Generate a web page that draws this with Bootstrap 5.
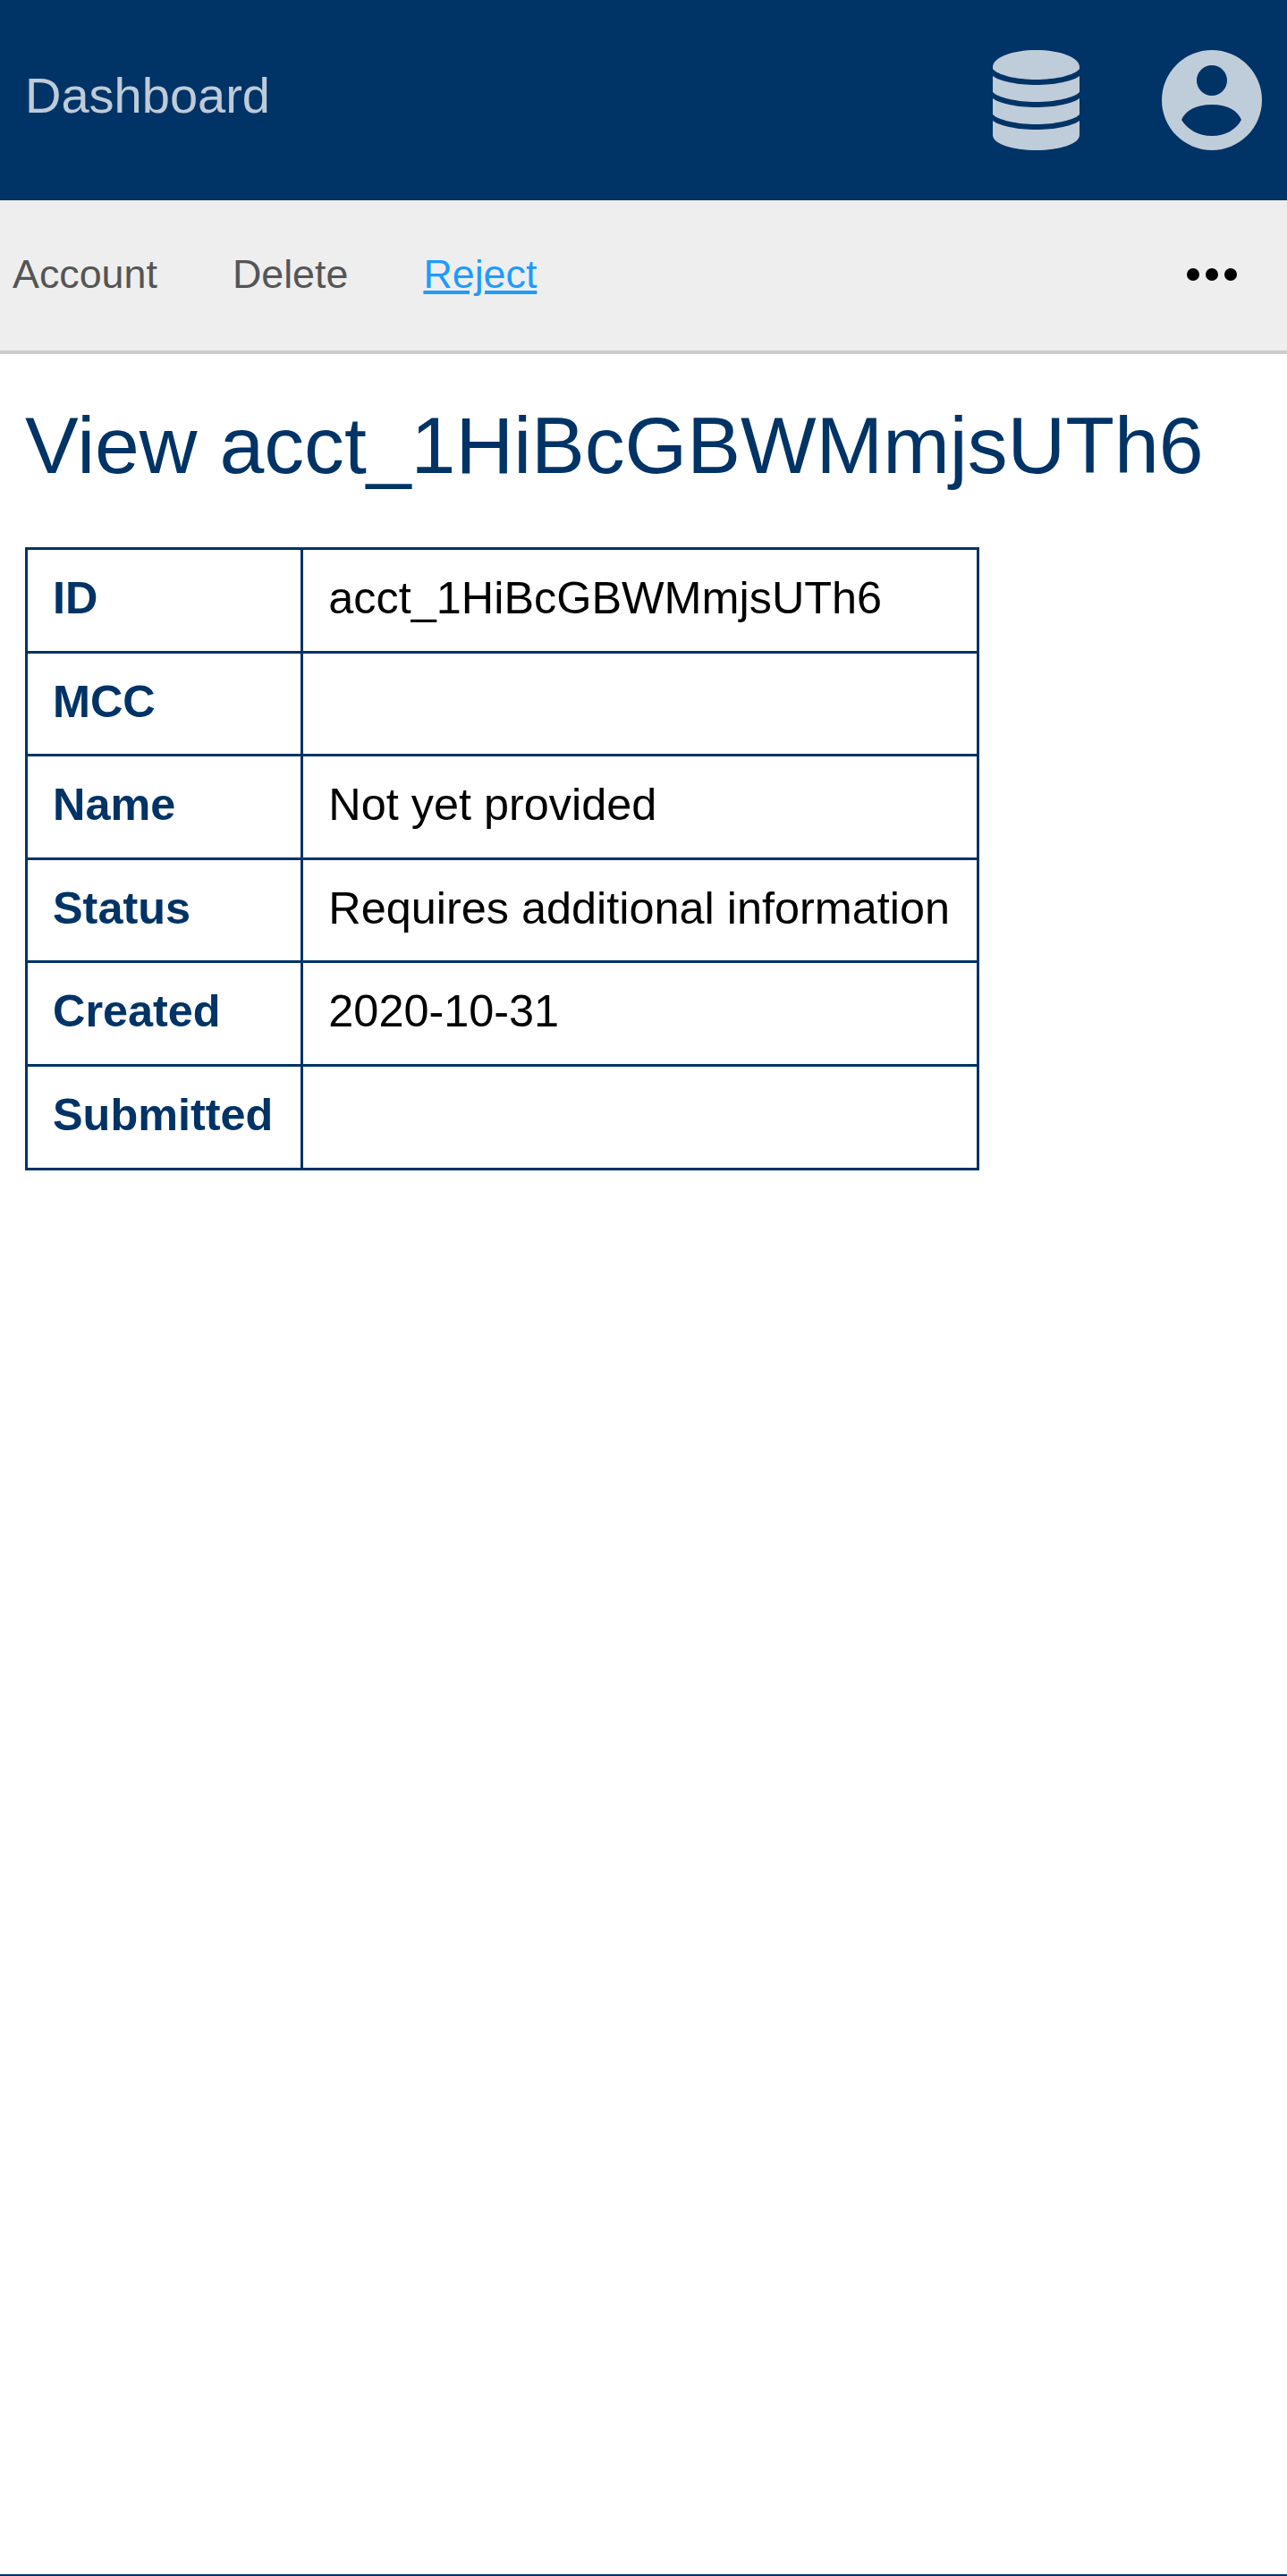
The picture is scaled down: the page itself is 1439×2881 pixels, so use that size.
<!DOCTYPE html>
<html lang="en">
<head>
    <meta charset="UTF-8">
    <meta name="viewport" content="width=device-width, initial-scale=1.0">
    <title>View account</title>
    <link href="https://cdn.jsdelivr.net/npm/bootstrap@5.3.0/dist/css/bootstrap.min.css" rel="stylesheet">
    <style>
        body { font-family: "Liberation Sans", Arial, sans-serif; min-height: 2881px; color: #000; }
        .top-bar { background: #003366; height: 224px; padding: 0 28px; }
        .top-bar .navbar-brand { color: rgba(255,255,255,.75); font-size: 56px; line-height: 1; margin: 0 0 10px; padding: 0; }
        .top-icons { gap: 92px; }
        .top-icons svg { display: block; height: 112px; fill: #bfccd9; }
        .sub-bar { background: #eee; height: 172px; border-bottom: 4px solid #ccc; padding: 0 28px 2px 14px; }
        .sub-bar a { font-size: 44.8px; color: #555; text-decoration: none; margin-right: 84px; }
        .sub-bar a.is-hover { color: #1e9bff; text-decoration: underline; }
        .more-dots { width: 56px; height: 14px; fill: #000; display: block; margin-right: 28px; }
        .page-body { padding: 51px 28px 0; }
        .page-title { color: #003366; font-size: 89.6px; font-weight: 400; line-height: 1.15; margin: 0 0 62px; }
        .acct-table { border-collapse: collapse; width: auto; margin: 0; font-size: 50.4px; }
        .acct-table th, .acct-table td { border: 3px solid #003366; padding: 25px 30px 30.6px 28px; line-height: 57px; color: #000; background: #fff; }
        .acct-table th { color: #003366; font-weight: 700; padding-right: 31px; }
        .page-foot { border-top: 2px solid #003366; }
    </style>
</head>
<body class="d-flex flex-column">

    <!-- header -->
    <nav class="navbar top-bar flex-nowrap">
        <a class="navbar-brand" href="#">Dashboard</a>
        <div class="d-flex align-items-center top-icons">
            <svg viewBox="0 0 97 112" width="97" aria-hidden="true">
                <path d="M0 19C0 8 22 0 48.5 0S97 8 97 19V21C92 28 70 33 48.5 33S5 28 0 21Z"/>
                <path d="M0 29C8 35 28 39 48.5 39S89 35 97 29V47C92 53 70 58 48.5 58S5 53 0 47Z"/>
                <path d="M0 54C8 60 28 64 48.5 64S89 60 97 54V72C92 78 70 83 48.5 83S5 78 0 72Z"/>
                <path d="M0 79C8 85 28 89 48.5 89S89 85 97 79V95C97 105 75 112 48.5 112S0 105 0 95Z"/>
            </svg>
            <svg viewBox="0 0 112 112" width="112" aria-hidden="true">
                <path fill-rule="evenodd" d="M56 0A56 56 0 1 1 56 112A56 56 0 1 1 56 0ZM56 17A17 17 0 1 0 56 51A17 17 0 1 0 56 17ZM56 61C38 61 26 68 22 78C29 89 41 96 56 96S83 89 89 78C85 68 74 61 56 61Z"/>
            </svg>
        </div>
    </nav>

    <!-- actions -->
    <div class="sub-bar d-flex align-items-center">
        <a href="#">Account</a>
        <a href="#">Delete</a>
        <a href="#" class="is-hover">Reject</a>
        <svg class="more-dots ms-auto" viewBox="0 0 56 14" aria-hidden="true">
            <circle cx="7" cy="7" r="7"/><circle cx="28" cy="7" r="7"/><circle cx="49" cy="7" r="7"/>
        </svg>
    </div>

    <!-- content -->
    <main class="flex-grow-1 page-body">
        <h1 class="page-title">View acct_1HiBcGBWMmjsUTh6</h1>
        <table class="table acct-table">
            <tbody>
                <tr><th>ID</th><td>acct_1HiBcGBWMmjsUTh6</td></tr>
                <tr><th>MCC</th><td></td></tr>
                <tr><th>Name</th><td>Not yet provided</td></tr>
                <tr><th>Status</th><td>Requires additional information</td></tr>
                <tr><th>Created</th><td>2020-10-31</td></tr>
                <tr><th>Submitted</th><td></td></tr>
            </tbody>
        </table>
    </main>

    <footer class="page-foot"></footer>

    <script src="https://cdn.jsdelivr.net/npm/bootstrap@5.3.0/dist/js/bootstrap.bundle.min.js"></script>
</body>
</html>
